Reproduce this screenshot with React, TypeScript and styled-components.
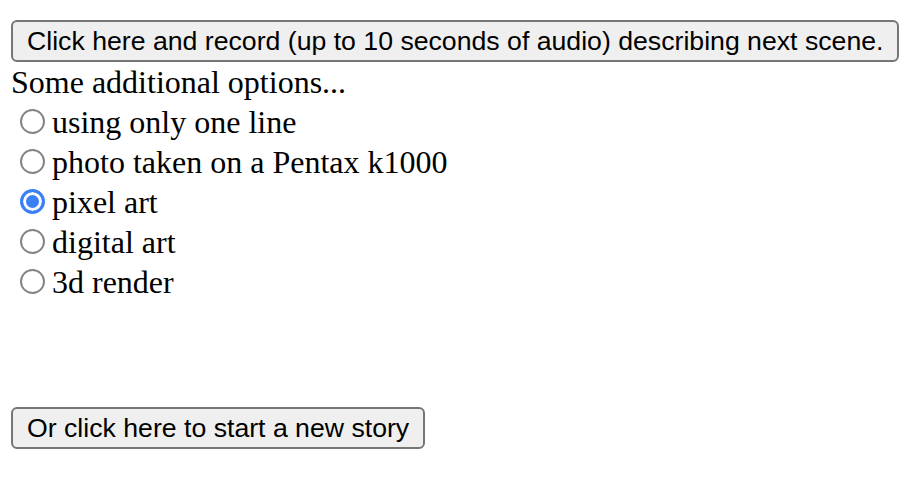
import React, { useState } from "react";
import styled, { createGlobalStyle } from "styled-components";

const GlobalStyle = createGlobalStyle`
  html, body {
    margin: 0;
    padding: 0;
    background: #ffffff;
  }
  body {
    font-family: "Liberation Serif", "Times New Roman", serif;
    color: #000000;
  }
`;

const Page = styled.div`
  padding: 20px 0 0 11px;
`;

const PushButton = styled.button<{ $gap?: number }>`
  display: inline-block;
  box-sizing: border-box;
  height: 42px;
  margin: ${(p) => p.$gap ?? 0}px 0 0 0;
  padding: 0 14px;
  border: 2px solid #767676;
  border-radius: 6px;
  background: #efefef;
  color: #000000;
  font-family: "Liberation Sans", Arial, sans-serif;
  font-size: 26.67px;
  line-height: 38px;
  white-space: nowrap;
  cursor: pointer;
`;

const Heading = styled.div`
  font-size: 32px;
  line-height: 40px;
`;

const OptionList = styled.div`
  display: flex;
  flex-direction: column;
`;

const OptionRow = styled.label`
  display: block;
  font-size: 32px;
  line-height: 40px;
  white-space: nowrap;
`;

const Radio = styled.input.attrs({ type: "radio" })`
  appearance: none;
  -webkit-appearance: none;
  box-sizing: border-box;
  display: inline-block;
  width: 25px;
  height: 25px;
  margin: 6px 7px 0 9px;
  border: 2px solid #858585;
  border-radius: 50%;
  background: #ffffff;
  vertical-align: baseline;
  position: relative;
  top: 1px;

  &:checked {
    border: 3px solid #3a80f6;
    background: #3a80f6;
    box-shadow: inset 0 0 0 3px #ffffff;
  }
`;

const options = [
  "using only one line",
  "photo taken on a Pentax k1000",
  "pixel art",
  "digital art",
  "3d render",
];

export default function App() {
  const [selected, setSelected] = useState("pixel art");
  return (
    <>
      <GlobalStyle />
      <Page>
        <PushButton>
          Click here and record (up to 10 seconds of audio) describing next scene.
        </PushButton>
        <Heading>Some additional options...</Heading>
        <OptionList>
          {options.map((o) => (
            <OptionRow key={o}>
              <Radio
                name="style"
                value={o}
                checked={selected === o}
                onChange={() => setSelected(o)}
              />
              {o}
            </OptionRow>
          ))}
        </OptionList>
        <PushButton $gap={105}>Or click here to start a new story</PushButton>
      </Page>
    </>
  );
}
